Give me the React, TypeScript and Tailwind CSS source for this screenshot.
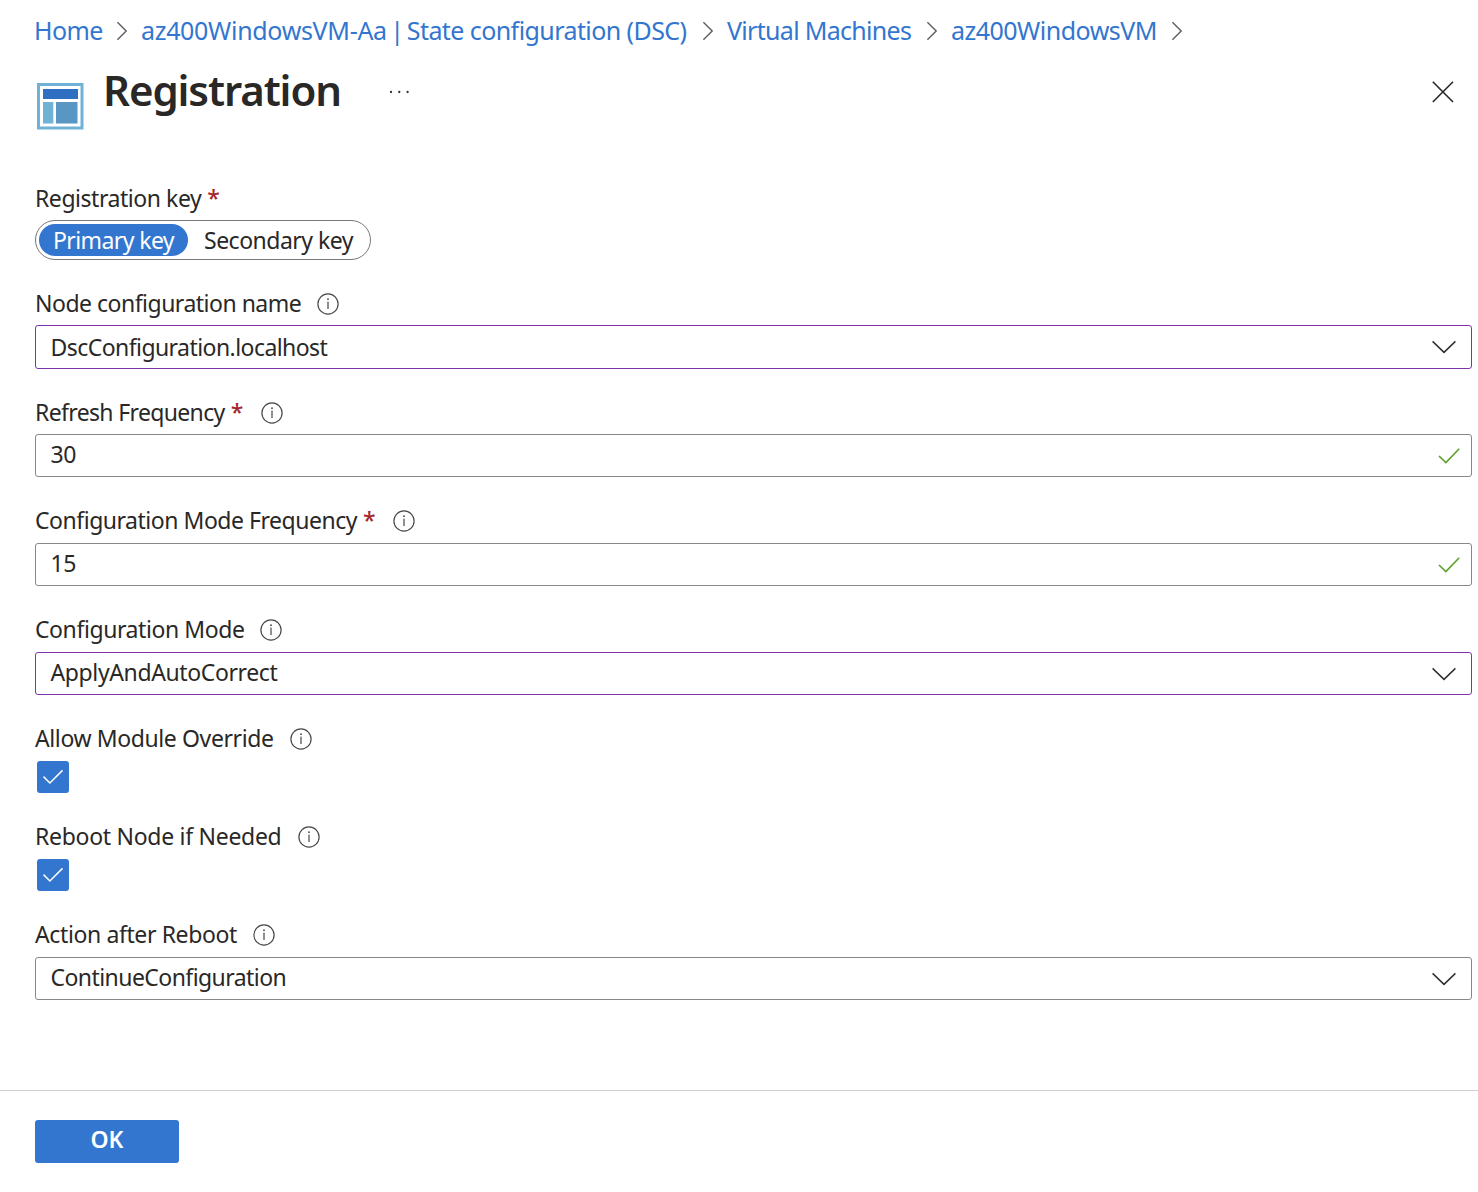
import type { ReactNode } from 'react';

function InfoIcon({ className = '' }: { className?: string }) {
  return (
    <svg className={`size-[22px] shrink-0 ${className}`} viewBox="0 0 22 22" fill="none">
      <circle cx="11" cy="11" r="10.1" stroke="#4a4948" strokeWidth="1.2" />
      <rect x="10.4" y="8.6" width="1.2" height="7.4" fill="#4a4948" />
      <circle cx="11" cy="6.2" r="0.9" fill="#4a4948" />
    </svg>
  );
}

function Separator({ className = '' }: { className?: string }) {
  return (
    <svg className={`h-[20px] w-[12px] shrink-0 ${className}`} viewBox="0 0 12 20" fill="none">
      <path d="M1.4 1.3 L10.2 10 L1.4 18.7" stroke="#605e5c" strokeWidth="1.4" />
    </svg>
  );
}

function ChevronDown() {
  return (
    <svg className="mr-[14px] h-[14px] w-[26px]" viewBox="0 0 26 14" fill="none">
      <path d="M1.6 1.4 L13 12.4 L24.4 1.4" stroke="#323130" strokeWidth="1.5" />
    </svg>
  );
}

function ValidMark() {
  return (
    <svg className="mr-[11px] h-[16px] w-[22px]" viewBox="0 0 22 16" fill="none">
      <path d="M1 8 L7.9 14.6 L21.2 0.8" stroke="#5ea02a" strokeWidth="1.6" />
    </svg>
  );
}

function FieldLabel({ text, tracking, height = 'h-[38px]', required, info }: { text: string; tracking: string; height?: string; required?: boolean; info?: string }) {
  return (
    <div className={`flex items-start leading-8 ${height}`}>
      <span className={tracking}>{text}</span>
      {required && <span className="ml-[6px] w-[12px] font-medium text-[#a4262c]">*</span>}
      {info && <InfoIcon className={`mt-[6px] ${info}`} />}
    </div>
  );
}

function Box({ text, tracking, className, children }: { text: string; tracking: string; className: string; children: ReactNode }) {
  return (
    <div className={`flex w-[1437px] items-center justify-between rounded-[3px] border pl-[14.5px] ${className}`}>
      <span className={`leading-8 ${tracking}`}>{text}</span>
      {children}
    </div>
  );
}

function Checkbox() {
  return (
    <div className="ml-[2px] flex size-8 items-center justify-center rounded-[3px] bg-[#3276cf]">
      <svg className="h-[16px] w-[22px]" viewBox="0 0 22 16" fill="none">
        <path d="M1.5 7.6 L7.9 14 L20.5 1.4" stroke="#ffffff" strokeWidth="1.5" />
      </svg>
    </div>
  );
}

export default function App() {
  return (
    <div className="flex h-[1192px] w-[1478px] flex-col overflow-hidden bg-white font-['Noto_Sans',sans-serif] text-[23px] whitespace-nowrap text-[#292827]">
      <nav className="flex h-[60px] shrink-0 items-center pl-[34px] text-[25px] leading-[58px] text-[#3276cf]">
        <a className="mb-[1px] w-[70px] tracking-[-0.6px]">Home</a>
        <Separator className="mt-[2px] ml-[12px]" />
        <a className="mb-[1px] ml-[13px] w-[546px] tracking-[-0.575px]">
          <span className="tracking-[-0.32px]">az400WindowsVM-Aa</span> <span className="-mx-[2.5px]">|</span> State configuration (DSC)
        </a>
        <Separator className="mt-[2px] ml-[15px]" />
        <a className="mb-[1px] ml-[13px] w-[186px] tracking-[-0.69px]">Virtual Machines</a>
        <Separator className="mt-[2px] ml-[13px]" />
        <a className="mb-[1px] ml-[13px] w-[206px] tracking-[-0.52px]">az400WindowsVM</a>
        <Separator className="mt-[2px] ml-[14px]" />
      </nav>

      <header className="flex h-[122px] shrink-0 items-start pl-[37px]">
        <svg className="mt-[23px] size-[47px] shrink-0" viewBox="0 0 47 47">
          <rect x="1.5" y="1.5" width="43.5" height="43.5" fill="#ffffff" stroke="#6fb2d6" strokeWidth="3" />
          <rect x="6" y="6" width="35" height="10" fill="#2f6fc1" />
          <rect x="6" y="19" width="10.3" height="21.5" fill="#6fb2d6" />
          <rect x="19" y="19" width="21.5" height="21.5" fill="#5896c3" />
        </svg>
        <h1 className="ml-[19px] w-[240px] text-[42px] leading-[60px] font-semibold tracking-[-1.1px]">Registration</h1>
        <svg className="mt-[30px] ml-[46px] h-[4px] w-[22px]" viewBox="0 0 22 4" fill="#323130">
          <circle cx="2" cy="2" r="1.15" />
          <circle cx="10.3" cy="2" r="1.15" />
          <circle cx="18.6" cy="2" r="1.15" />
        </svg>
        <svg className="mt-[21px] mr-[24px] ml-auto size-[22px]" viewBox="0 0 22 22" fill="none">
          <path d="M0.8 0.8 L21 21 M21 0.8 L0.8 21" stroke="#292827" strokeWidth="1.6" />
        </svg>
      </header>

      <main className="flex h-[909px] shrink-0 flex-col border-b border-[#d2d0ce] pl-[35px]">
        <section className="mb-[27px]">
          <FieldLabel text="Registration key" tracking="tracking-[-0.45px]" required />
          <div className="flex h-10 w-[336px] items-center rounded-full border border-[#7a7876] pl-[3px]">
            <span className="flex h-8 w-[149px] items-center justify-center rounded-full bg-[#3276cf] tracking-[-0.6px] text-white">Primary key</span>
            <span className="ml-[16px] tracking-[-0.5px]">Secondary key</span>
          </div>
        </section>
        <section className="mb-[27px]">
          <FieldLabel text="Node configuration name" tracking="tracking-[-0.5px]" info="ml-[16px]" />
          <Box text="DscConfiguration.localhost" tracking="tracking-[-0.56px] pb-[1px]" className="h-[44px] border-[#8032a8]"><ChevronDown /></Box>
        </section>
        <section className="mb-[27px]">
          <FieldLabel text="Refresh Frequency" tracking="tracking-[-0.65px]" required info="ml-[18px]" />
          <Box text="30" tracking="tracking-[-0.4px] pb-[3px]" className="h-[43px] border-[#8a8886]"><ValidMark /></Box>
        </section>
        <section className="mb-[27px]">
          <FieldLabel text="Configuration Mode Frequency" tracking="tracking-[-0.475px]" height="h-[39px]" required info="ml-[18px]" />
          <Box text="15" tracking="tracking-[-0.4px] pb-[3px]" className="h-[43px] border-[#8a8886]"><ValidMark /></Box>
        </section>
        <section className="mb-[27px]">
          <FieldLabel text="Configuration Mode" tracking="tracking-[-0.42px]" height="h-[39px]" info="ml-[15px]" />
          <Box text="ApplyAndAutoCorrect" tracking="tracking-[-0.38px] pb-[3px]" className="h-[43px] border-[#8032a8]"><ChevronDown /></Box>
        </section>
        <section className="mb-[27px]">
          <FieldLabel text="Allow Module Override" tracking="tracking-[-0.39px]" height="h-[39px]" info="ml-[16px]" />
          <Checkbox />
        </section>
        <section className="mb-[27px]">
          <FieldLabel text="Reboot Node if Needed" tracking="tracking-[-0.29px]" height="h-[39px]" info="ml-[17px]" />
          <Checkbox />
        </section>
        <section>
          <FieldLabel text="Action after Reboot" tracking="tracking-[-0.384px]" height="h-[39px]" info="ml-[16px]" />
          <Box text="ContinueConfiguration" tracking="tracking-[-0.56px] pb-[3px]" className="h-[43px] border-[#8a8886]"><ChevronDown /></Box>
        </section>
      </main>

      <footer className="pt-[29px] pl-[35px]">
        <button className="flex h-[43px] w-[144px] items-center justify-center rounded-[3px] bg-[#3276cf] pb-[4px] font-semibold text-white">OK</button>
      </footer>
    </div>
  );
}
